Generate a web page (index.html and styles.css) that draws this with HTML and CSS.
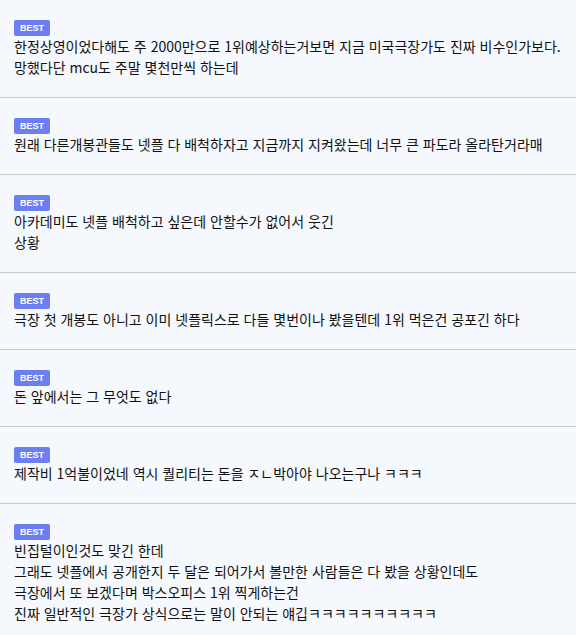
FILE: index.html
```html
<!DOCTYPE html>
<html lang="ko">
<head>
    <meta charset="utf-8">
    <meta name="viewport" content="width=device-width, initial-scale=1.0">
    <title>베스트 댓글</title>
    <link rel="stylesheet" href="styles.css">
</head>
<body>
    <div class="comment-list">
        <div class="comment">
            <span class="best-badge">BEST</span>
            <p class="comment-text">한정상영이었다해도 주 2000만으로 1위예상하는거보면 지금 미국극장가도 진짜 비수인가보다.<br>망했다단 mcu도 주말 몇천만씩 하는데</p>
        </div>
        <div class="comment">
            <span class="best-badge">BEST</span>
            <p class="comment-text">원래 다른개봉관들도 넷플 다 배척하자고 지금까지 지켜왔는데 너무 큰 파도라 올라탄거라매</p>
        </div>
        <div class="comment">
            <span class="best-badge">BEST</span>
            <p class="comment-text">아카데미도 넷플 배척하고 싶은데 안할수가 없어서 웃긴<br>상황</p>
        </div>
        <div class="comment">
            <span class="best-badge">BEST</span>
            <p class="comment-text">극장 첫 개봉도 아니고 이미 넷플릭스로 다들 몇번이나 봤을텐데 1위 먹은건 공포긴 하다</p>
        </div>
        <div class="comment">
            <span class="best-badge">BEST</span>
            <p class="comment-text">돈 앞에서는 그 무엇도 없다</p>
        </div>
        <div class="comment">
            <span class="best-badge">BEST</span>
            <p class="comment-text">제작비 1억불이었네 역시 퀄리티는 돈을 ㅈㄴ박아야 나오는구나 ㅋㅋㅋ</p>
        </div>
        <div class="comment">
            <span class="best-badge">BEST</span>
            <p class="comment-text">빈집털이인것도 맞긴 한데<br>그래도 넷플에서 공개한지 두 달은 되어가서 볼만한 사람들은 다 봤을 상황인데도<br>극장에서 또 보겠다며 박스오피스 1위 찍게하는건<br>진짜 일반적인 극장가 상식으로는 말이 안되는 얘깁ㅋㅋㅋㅋㅋㅋㅋㅋㅋㅋ</p>
        </div>
    </div>
</body>
</html>
```

FILE: styles.css
```css
* {
    padding: 0;
    margin: 0;
}

body {
    background: #f5f8fd;
    font-family: "Noto Sans CJK KR", "Noto Sans", sans-serif;
    color: #111;
}

.comment {
    padding: 20px 14px 19px 14px;
    border-bottom: 1px solid #c9cacd;
}

.best-badge {
    display: flex;
    justify-content: center;
    align-items: center;
    width: 36px;
    height: 16px;
    border-radius: 2px;
    background: #6d7ef2;
    color: #fff;
    font-family: "Liberation Sans", Arial, sans-serif;
    font-weight: bold;
    font-size: 9px;
}

.comment-text {
    font-size: 14px;
    line-height: 21px;
    white-space: nowrap;
}
```
